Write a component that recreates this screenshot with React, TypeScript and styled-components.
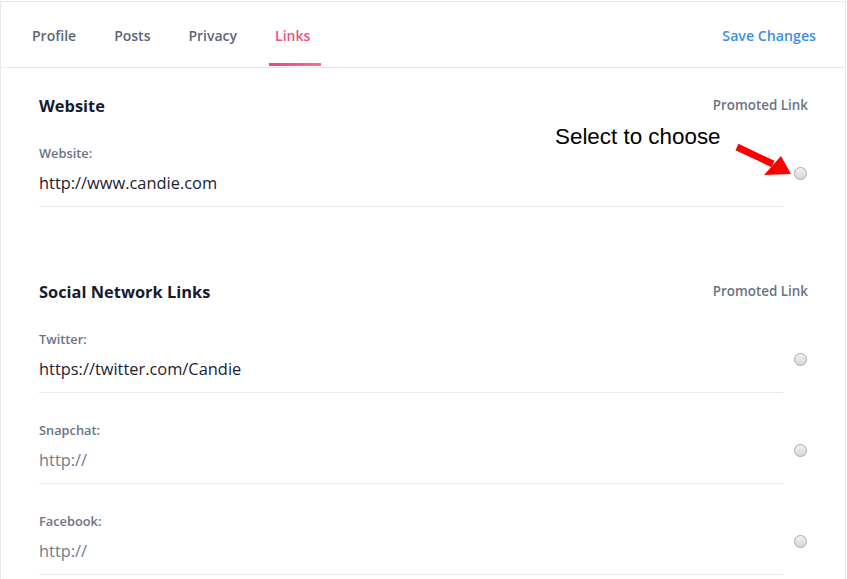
import React from "react";
import styled, { createGlobalStyle } from "styled-components";

const Global = createGlobalStyle`
  html, body { margin: 0; padding: 0; background: #fff; }
  body { font-family: "Open Sans", "Noto Sans", sans-serif; }
  * { box-sizing: border-box; }
`;

const Card = styled.div`
  position: relative;
  width: 846px;
  margin-top: 1px;
  min-height: 578px;
  border: 1px solid #e6e8ed;
  border-bottom: none;
  background: #fff;
`;

const Nav = styled.div`
  display: flex;
  align-items: stretch;
  height: 66px;
  border-bottom: 1px solid #e6e8ed;
  padding: 2px 29px 0 25px;
`;

const Tabs = styled.div`
  display: flex;
  gap: 26px;
  flex: 1;
`;

const Tab = styled.div<{ $active?: boolean }>`
  position: relative;
  display: flex;
  align-items: center;
  padding: 0 6px;
  font-size: 14px;
  font-weight: 600;
  color: ${(p) => (p.$active ? "#ee4f7e" : "#5b6679")};
  &::after {
    content: "";
    display: ${(p) => (p.$active ? "block" : "none")};
    position: absolute;
    left: 0;
    width: 52px;
    bottom: 1px;
    height: 3px;
    background: linear-gradient(90deg, #ea4677, #f56f90);
  }
`;

const SaveButton = styled.button`
  border: none;
  background: none;
  padding: 0;
  font-family: inherit;
  font-size: 14.2px;
  font-weight: 600;
  color: #3b8fe6;
  cursor: pointer;
`;

const Content = styled.div`
  padding: 0 37px 0 38px;
`;

const Section = styled.section<{ $gap?: number }>`
  padding-top: 26px;
  margin-bottom: ${(p) => p.$gap ?? 0}px;
`;

const SectionHeader = styled.div`
  display: flex;
  justify-content: space-between;
  align-items: center;
  height: 22px;
`;

const Heading = styled.h2`
  margin: 0;
  font-size: 16.4px;
  font-weight: 700;
  color: #161c2d;
`;

const Promoted = styled.span`
  font-size: 13.4px;
  font-weight: 600;
  color: #6b7385;
`;

const Row = styled.div`
  display: flex;
  align-items: flex-end;
`;

const Field = styled.div`
  flex: 1;
  padding: 28px 0 11px;
  border-bottom: 1px solid #e8e9ee;
`;

const Label = styled.div`
  font-size: 12.8px;
  line-height: 18px;
  font-weight: 600;
  color: #6b7385;
  margin-bottom: 9px;
`;

const Value = styled.div<{ $placeholder?: boolean }>`
  font-size: 16.4px;
  line-height: 24px;
  color: ${(p) => (p.$placeholder ? "#737b8c" : "#1d2230")};
`;

const RadioCol = styled.div`
  width: 25px;
  display: flex;
  justify-content: flex-end;
  padding: 0 1px 27px 0;
`;

const Radio = styled.span`
  display: block;
  width: 13px;
  height: 13px;
  border-radius: 50%;
  border: 1px solid #a9a9a9;
  background: linear-gradient(180deg, #f2f2f2, #d6d6d6);
`;

const Annotation = styled.div`
  position: absolute;
  left: 554px;
  top: 122px;
  font-family: "Liberation Sans", Arial, sans-serif;
  font-size: 22.4px;
  color: #000;
`;

const Arrow = styled.svg`
  position: absolute;
  left: 729px;
  top: 137px;
`;

type Link = { label: string; value?: string };

const social: Link[] = [
  { label: "Twitter:", value: "https://twitter.com/Candie" },
  { label: "Snapchat:" },
  { label: "Facebook:" },
];

function LinkRow({ label, value }: Link) {
  return (
    <Row>
      <Field>
        <Label>{label}</Label>
        <Value $placeholder={!value}>{value ?? "http://"}</Value>
      </Field>
      <RadioCol>
        <Radio />
      </RadioCol>
    </Row>
  );
}

export default function App() {
  return (
    <>
      <Global />
      <Card>
        <Nav>
          <Tabs>
            <Tab>Profile</Tab>
            <Tab>Posts</Tab>
            <Tab>Privacy</Tab>
            <Tab $active>Links</Tab>
          </Tabs>
          <SaveButton>Save Changes</SaveButton>
        </Nav>
        <Content>
          <Section $gap={47}>
            <SectionHeader>
              <Heading>Website</Heading>
              <Promoted>Promoted Link</Promoted>
            </SectionHeader>
            <LinkRow label="Website:" value="http://www.candie.com" />
          </Section>
          <Section>
            <SectionHeader>
              <Heading>Social Network Links</Heading>
              <Promoted>Promoted Link</Promoted>
            </SectionHeader>
            {social.map((s) => (
              <LinkRow key={s.label} {...s} />
            ))}
          </Section>
        </Content>
        <Annotation>Select to choose</Annotation>
        <Arrow width="70" height="40" viewBox="0 0 70 40">
          <line x1="7" y1="8" x2="43" y2="25" stroke="#ff0000" strokeWidth="7" />
          <polygon points="34,36 51,17 61,35" fill="#ff0000" />
        </Arrow>
      </Card>
    </>
  );
}
